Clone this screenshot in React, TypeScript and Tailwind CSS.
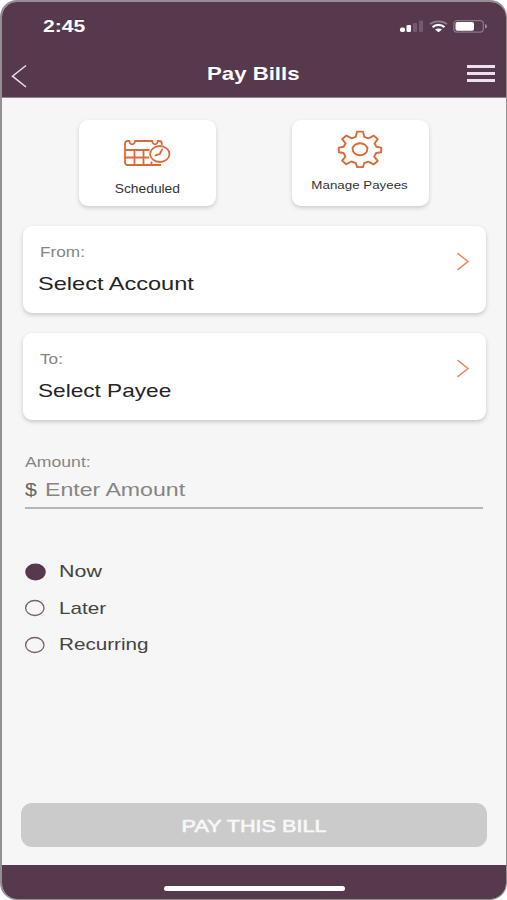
import React, { useState } from 'react';

type Schedule = 'Now' | 'Later' | 'Recurring';

const SCHEDULES: { value: Schedule; className: string }[] = [
  { value: 'Now', className: 'scale-x-[1.26]' },
  { value: 'Later', className: 'scale-x-[1.22]' },
  { value: 'Recurring', className: 'scale-x-[1.215]' },
];

const StatusIcons: React.FC = () => (
  <svg width="90" height="16" viewBox="0 0 90 16" fill="none">
    <rect x="1" y="8.500" width="5" height="4.500" rx="1.800" fill="#fff" />
    <rect x="7.500" y="6" width="4.500" height="7" rx="1.300" fill="#fff" />
    <rect x="14" y="4" width="4" height="9" rx="1" fill="#75596f" />
    <rect x="20" y="1.500" width="4" height="11.500" rx="1" fill="#75596f" />
    <path d="M31 5.200C35.500 1.300 43.500 1.300 48 5.200" stroke="#927b92" strokeWidth="1.700" />
    <path d="M33.500 8.100c3.400-3 8.600-3 12 0" stroke="#fff" strokeWidth="2.100" />
    <path d="M36 10.600c1.900-1.500 5.100-1.500 7 0L39.500 13.300z" fill="#fff" />
    <rect x="54.800" y="1.700" width="29.500" height="11.400" rx="3" stroke="#8c768c" strokeWidth="1.200" />
    <rect x="56.500" y="3" width="18.500" height="8.700" rx="1.800" fill="#fff" />
    <path d="M86 5v4.500c1.600-.6 2-1.300 2-2.200S87.600 5.600 86 5z" fill="#a08ca0" />
  </svg>
);

const ScheduledIcon: React.FC = () => (
  <svg width="48" height="28" viewBox="0 0 48 28" fill="none" stroke="#dc6a36" strokeWidth="1.800">
    <path d="M37 26H3.500a2.500 2.500 0 0 1-2.500-2.500V4.500A2.500 2.500 0 0 1 3.500 2h1.800c.3 2.200 1.200 3.300 2.900 3.300S10.800 4.200 11.100 2h17c.3 2.200 1.200 3.300 2.900 3.300s2.600-1.100 2.900-3.300h1.400A2.500 2.500 0 0 1 37.800 4.500v3" />
    <path d="M1 11h26.500M1 18.500h24.500M10.500 11V26M19.500 11V26M27.500 22.500V26" />
    <ellipse cx="35.800" cy="15" rx="11.300" ry="9.500" fill="#fff" stroke="none" />
    <ellipse cx="35.800" cy="15" rx="9.700" ry="8" />
    <path d="M38.100 10.400l-2.300 4.600-4.300 1.300" strokeLinecap="round" />
  </svg>
);

const GearIcon: React.FC = () => (
  <svg width="46" height="38" viewBox="0 0 46 38" fill="none" stroke="#dc6a36" strokeWidth="1.900" strokeLinejoin="round">
    <path d="M20 1.600h6l1.200 5.200 4.300 1.600 5.300-2.700 4 3.400-3.200 4.300 1.800 3.400 4.800.8v4.600l-5.100.8-1.900 3.600 3.500 4.300-4.200 3.500-5.200-2.800-4.200 1.600-1.100 3.900h-6l-1.200-4-4.300-1.600-5.300 2.700-4-3.500 3.200-4.100-1.800-3.600-4.800-.8v-4.600l4.900-.8 1.900-3.500-3.400-4.200 4.200-3.500 5.200 2.800 4.200-1.600z" />
    <ellipse cx="23" cy="19.200" rx="7.400" ry="6" />
  </svg>
);

const Picker: React.FC<{
  label: string;
  value: string;
  valueClass: string;
}> = ({ label, value, valueClass }) => (
  <button className="flex h-[87px] w-full justify-between rounded-[9px] bg-white pt-[16px] pr-[16px] pl-[15px] text-left shadow-[0_2px_4px_rgba(0,0,0,0.19)]">
    <span className="flex flex-col">
      <span className="ml-[2px] origin-left scale-x-[1.23] text-[14px] leading-5 text-[#858585]">{label}</span>
      <span className={`mt-[10px] self-start origin-left text-[19px] leading-6 text-[#242424] ${valueClass}`}>{value}</span>
    </span>
    <svg className="mt-[10px]" width="14" height="19" viewBox="0 0 14 19" fill="none" stroke="#e58a61" strokeWidth="1.500">
      <path d="M1.500 1.200 12 9.500 1.500 17.800" />
    </svg>
  </button>
);

const App: React.FC = () => {
  const [schedule, setSchedule] = useState<Schedule>('Now');
  const [amount, setAmount] = useState('');

  return (
    <div className="h-[900px] w-[507px] bg-white font-['Liberation_Sans',Arial,sans-serif]">
      <div className="flex h-full flex-col overflow-hidden rounded-[17px] border-t-2 border-r border-b border-l-2 border-[#939094] bg-[#f6f6f6]">
        <header className="h-[96px] shrink-0 border-b border-[#8f808e] bg-[#56394d] text-white">
          <div className="flex h-[49px] items-center justify-between pr-[17px] pl-[41px]">
            <span className="origin-left scale-x-[1.28] text-[16.500px] font-bold">2:45</span>
            <StatusIcons />
          </div>
          <div className="grid h-[45px] grid-cols-3 items-center pr-[11px] pl-[9px]">
            <button className="pt-[4px]">
              <svg width="16" height="24" viewBox="0 0 16 24" fill="none" stroke="#eadde8" strokeWidth="1.500">
                <path d="M15 1.500 1.500 12.200 15 23" />
              </svg>
            </button>
            <h1 className="pl-px text-center text-[18.500px] font-bold whitespace-nowrap scale-x-[1.2]">Pay Bills</h1>
            <button className="flex w-[28px] flex-col gap-[4px] justify-self-end">
              <span className="h-[3px] bg-[#eddfeb]" />
              <span className="h-[3px] bg-[#eddfeb]" />
              <span className="h-[3px] bg-[#eddfeb]" />
            </button>
          </div>
        </header>

        <main className="flex flex-1 flex-col pt-[22px] pr-[20px] pl-[21px]">
          <div className="flex justify-between pr-[57px] pl-[56px]">
            <button className="flex h-[86px] w-[137px] flex-col items-center rounded-[9px] bg-white pt-[19px] text-[12px] text-[#333] shadow-[0_2px_4px_rgba(0,0,0,0.17)]">
              <ScheduledIcon />
              <span className="mt-[14px] scale-x-[1.15] leading-4">Scheduled</span>
            </button>
            <button className="flex h-[86px] w-[137px] flex-col items-center rounded-[9px] bg-white pt-[10px] pr-[2px] text-[11.500px] text-[#333] shadow-[0_2px_4px_rgba(0,0,0,0.17)]">
              <GearIcon />
              <span className="mt-[9px] scale-x-[1.16] leading-4">Manage Payees</span>
            </button>
          </div>

          <div className="mt-[20px] flex flex-col gap-[20px]">
            <Picker label="From:" value="Select Account" valueClass="scale-x-[1.24]" />
            <Picker label="To:" value="Select Payee" valueClass="scale-x-[1.19]" />
          </div>

          <label className="mt-[32px] mr-[3px] ml-[2px] flex flex-col border-b-2 border-[#b5b5b5]">
            <span className="self-start origin-left scale-x-[1.26] text-[14px] leading-5 text-[#858585]">Amount:</span>
            <span className="flex h-[35px] items-center pt-px text-[18.500px]">
              <span className="w-[20px] origin-left scale-x-[1.15] text-[#666]">$</span>
              <input
                value={amount}
                onChange={e => setAmount(e.target.value)}
                placeholder="Enter Amount"
                className="w-[300px] origin-left scale-x-[1.25] bg-transparent text-[#333] outline-none placeholder:text-[#858585]"
              />
            </span>
          </label>

          <div className="mt-[45px] ml-[2px] flex flex-col">
            {SCHEDULES.map(option => (
              <button key={option.value} onClick={() => setSchedule(option.value)} className="flex h-[36.300px] items-center gap-[13px]">
                <svg width="21" height="18" viewBox="0 0 21 18">
                  {schedule === option.value ? (
                    <ellipse cx="10.500" cy="9" rx="10.300" ry="8.500" fill="#56394d" />
                  ) : (
                    <ellipse cx="9.800" cy="9" rx="9.200" ry="7.500" fill="none" stroke="#79606f" strokeWidth="1.300" />
                  )}
                </svg>
                <span className={`origin-left text-[17px] text-[#444] ${option.className}`}>{option.value}</span>
              </button>
            ))}
          </div>

          <button className="mt-auto mb-[18px] -ml-[2px] flex h-[44px] w-[466px] items-center justify-center rounded-[11px] bg-[#cbcbcb] pt-[3px] text-[17px] text-[#f8f8f8]">
            <span className="scale-x-[1.27] [-webkit-text-stroke:0.6px_#f8f8f8]">PAY THIS BILL</span>
          </button>
        </main>

        <footer className="flex h-[34px] shrink-0 justify-center bg-[#56394d] pt-[21px]">
          <div className="h-[5px] w-[181px] rounded-full bg-white" />
        </footer>
      </div>
    </div>
  );
};

export default App;
